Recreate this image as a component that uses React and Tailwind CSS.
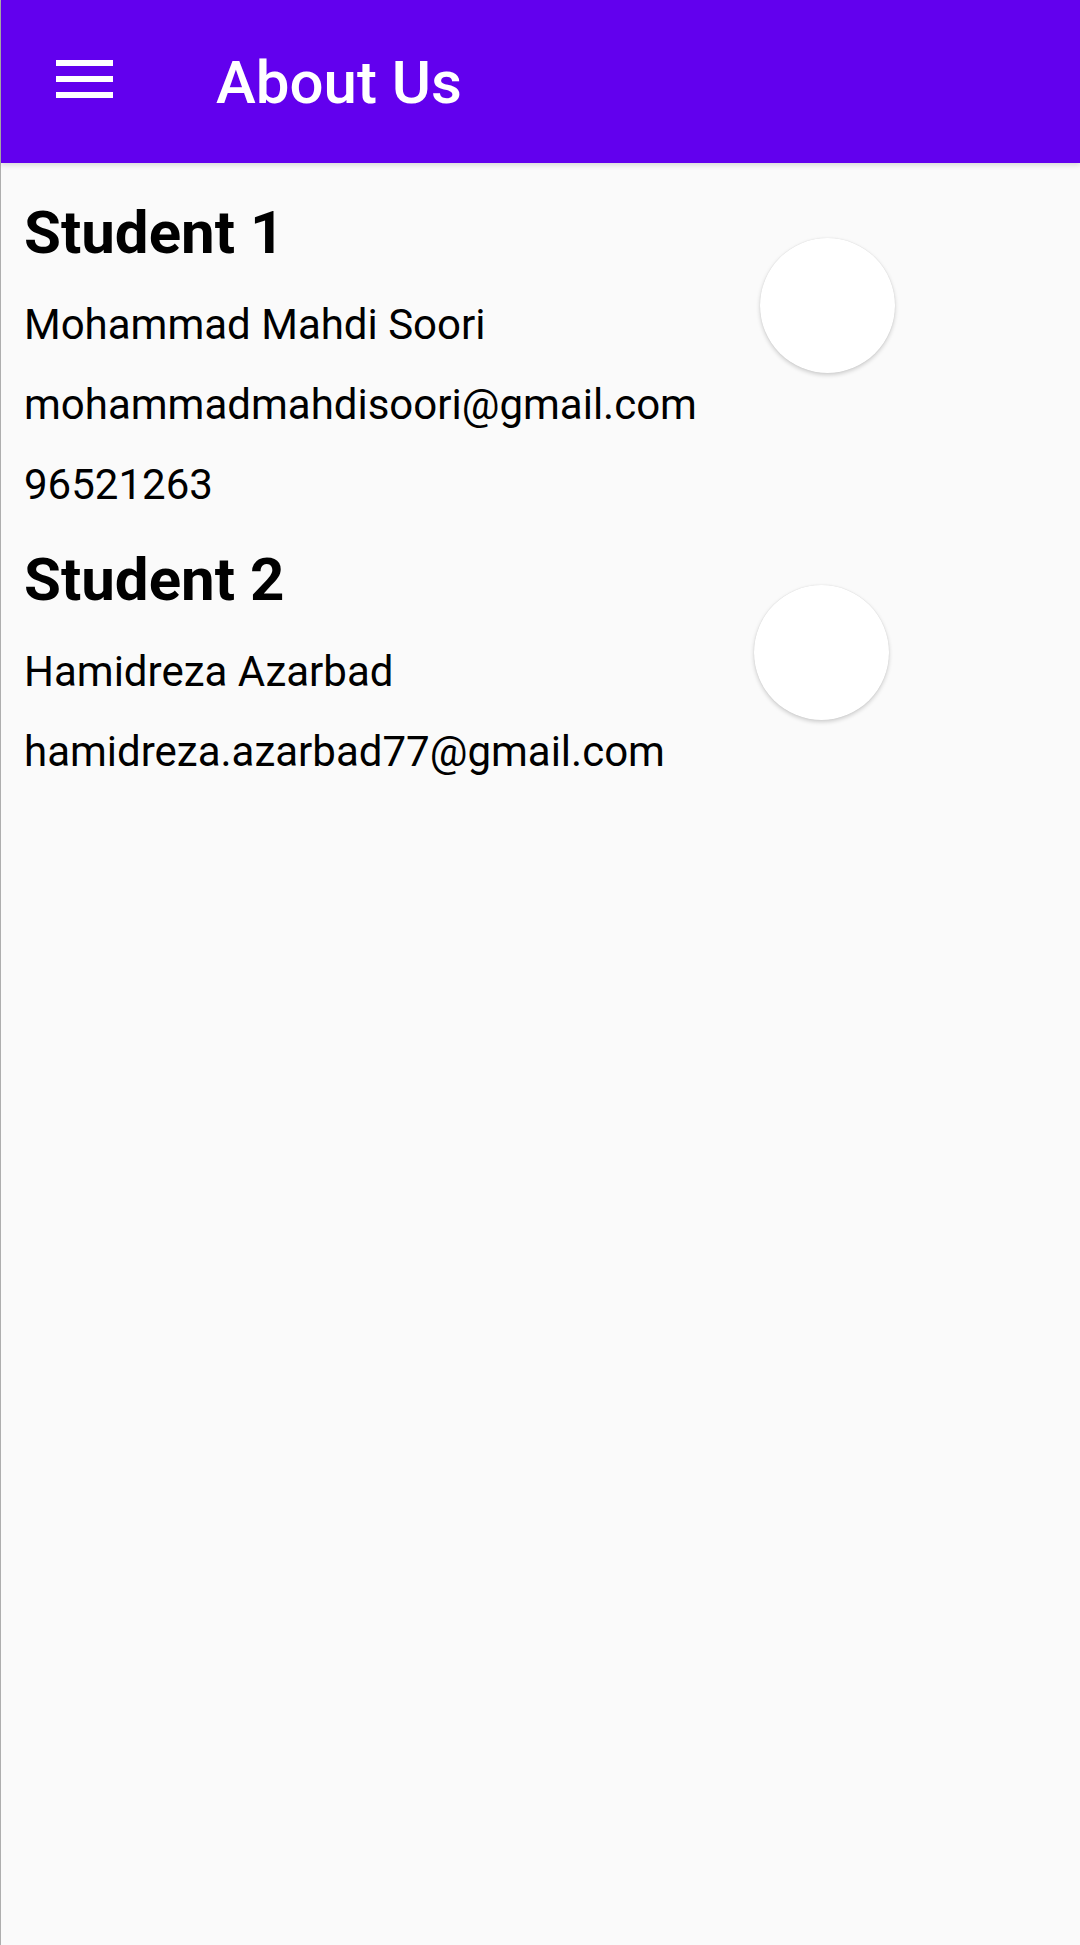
import React from 'react';

const students = [
  {
    title: 'Student 1',
    lines: ['Mohammad Mahdi Soori', 'mohammadmahdisoori@gmail.com', '96521263'],
    avatarClass: 'ml-[36px]',
  },
  {
    title: 'Student 2',
    lines: ['Hamidreza Azarbad', 'hamidreza.azarbad77@gmail.com'],
    avatarClass: 'ml-[30px]',
  },
];

function MenuIcon() {
  return (
    <svg width="57" height="38" viewBox="0 0 57 38" className="mb-[5px] shrink-0">
      <rect x="0" y="0" width="57" height="6" fill="#ffffff" />
      <rect x="0" y="16" width="57" height="6" fill="#ffffff" />
      <rect x="0" y="32" width="57" height="6" fill="#ffffff" />
    </svg>
  );
}

function StudentCard({ student }) {
  return (
    <div className="flex mt-[35px]">
      <div className="w-[700px]">
        <h2 className="text-[60px] leading-[70px] font-bold text-black">{student.title}</h2>
        {student.lines.map((line, i) => (
          <p
            key={line}
            className={`text-[42px] leading-[50px] text-black ${i === 0 ? 'mt-[32px]' : 'mt-[30px]'}`}
          >
            {line}
          </p>
        ))}
      </div>
      {/* avatar placeholder */}
      <div
        className={`${student.avatarClass} mt-[40px] w-[135px] h-[135px] rounded-full bg-white shrink-0 shadow-[0_2px_4px_rgba(0,0,0,0.18),0_0_1px_rgba(0,0,0,0.15)]`}
      />
    </div>
  );
}

export default function App() {
  return (
    <div
      className="w-[1080px] min-h-[1945px] bg-[#fafafa] border-l border-black/30"
      style={{ fontFamily: 'Roboto, "Noto Sans", sans-serif' }}
    >
      {/* App bar */}
      <header className="relative z-10 h-[163px] bg-[#6200ee] flex items-center pl-[55px] shadow-[0_2px_5px_rgba(0,0,0,0.14)]">
        <MenuIcon />
        <h1 className="ml-[103px] pt-[2px] text-[60px] leading-[70px] font-medium text-white">About Us</h1>
      </header>

      <main className="pl-[23px]">
        {students.map((s) => (
          <StudentCard key={s.title} student={s} />
        ))}
      </main>
    </div>
  );
}
